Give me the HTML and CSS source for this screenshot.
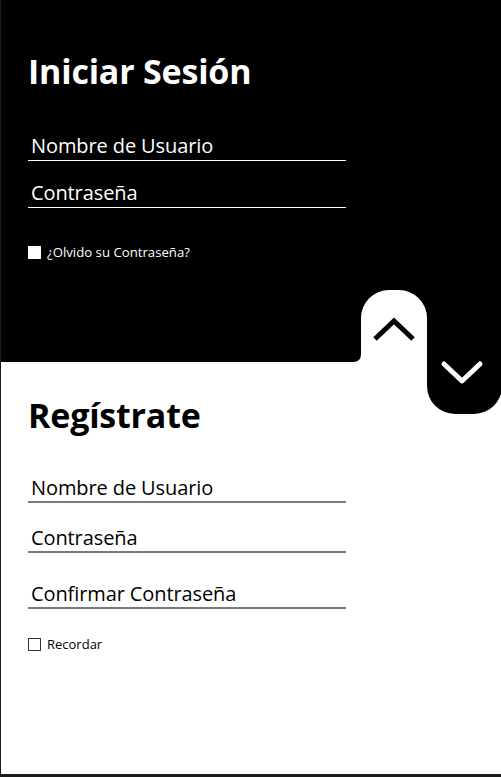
FILE: index.html
```html
<!DOCTYPE html>
<html lang="es">
<head>
<meta charset="utf-8">
<title>Iniciar Sesión</title>
<link rel="stylesheet" href="styles.css">
</head>
<body>
<div class="app">
  <section class="panel login">
    <h1 class="title">Iniciar Sesión</h1>
    <div class="field">Nombre de Usuario</div>
    <div class="field">Contraseña</div>
    <label class="check"><span class="box"></span>¿Olvido su Contraseña?</label>
  </section>
  <section class="panel register">
    <h1 class="title">Regístrate</h1>
    <div class="field">Nombre de Usuario</div>
    <div class="field">Contraseña</div>
    <div class="field field-confirm">Confirmar Contraseña</div>
    <label class="check"><span class="box"></span>Recordar</label>
  </section>
  <svg class="toggle" width="162" height="135" viewBox="339 285 162 135" aria-hidden="true">
    <path class="tab-up" d="M353 362 Q361 362 361 354 L361 318 A28 28 0 0 1 389 290 L399 290 A28 28 0 0 1 427 318 L427 362 Z"/>
    <path class="tab-down" d="M427 340 L427 386 A28 28 0 0 0 455 414 L474 414 A28 28 0 0 0 502 386 L502 340 Z"/>
    <polyline class="chev-up" points="375,339 394,321 413,339"/>
    <polyline class="chev-down" points="444,364 462,381 480,364"/>
  </svg>
</div>
</body>
</html>
```
FILE: styles.css
```css
* { box-sizing: border-box; }
html, body { margin: 0; padding: 0; background: #fff; }
body { font-family: "Open Sans", "Liberation Sans", sans-serif; }
.app {
  position: relative;
  width: 501px;
  height: 777px;
  border-left: 1px solid #1b1b1b;
  border-bottom: 3px solid #1b1b1b;
  overflow: hidden;
  display: flex;
  flex-direction: column;
}
.panel { padding-left: 27px; }
.login {
  background: #000;
  color: #fff;
  height: 362px;
  padding-top: 48px;
}
.register {
  flex: 1;
  background: #fff;
  color: #000;
  padding-top: 30px;
}
.title {
  margin: 0;
  font-size: 34px;
  font-weight: 700;
  line-height: 46px;
  letter-spacing: -0.2px;
}
.field {
  width: 318px;
  height: 28px;
  padding-left: 3px;
  font-size: 20px;
  line-height: 26px;
  letter-spacing: -0.1px;
}
.login .field { border-bottom: 1.5px solid #fff; margin-top: 19px; }
.login .title + .field { margin-top: 39px; }
.register .field { border-bottom: 2px solid #7a7a7a; margin-top: 22px; }
.register .title + .field { margin-top: 37px; }
.register .field-confirm { margin-top: 28px; }
.check {
  display: flex;
  align-items: center;
  gap: 6px;
  height: 18px;
  font-size: 13.2px;
  line-height: 18px;
  margin-top: 35px;
}
.register .check { margin-top: 26px; font-size: 13px; }
.box { width: 13px; height: 13px; display: inline-block; flex: none; }
.login .box { background: #fff; }
.register .box { border: 1px solid #333; background: #fff; }
.toggle { position: absolute; left: 338px; top: 285px; }
.tab-up { fill: #fff; }
.tab-down { fill: #000; }
.chev-up { fill: none; stroke: #000; stroke-width: 5; }
.chev-down { fill: none; stroke: #fff; stroke-width: 5; stroke-linecap: round; stroke-linejoin: round; }
```
